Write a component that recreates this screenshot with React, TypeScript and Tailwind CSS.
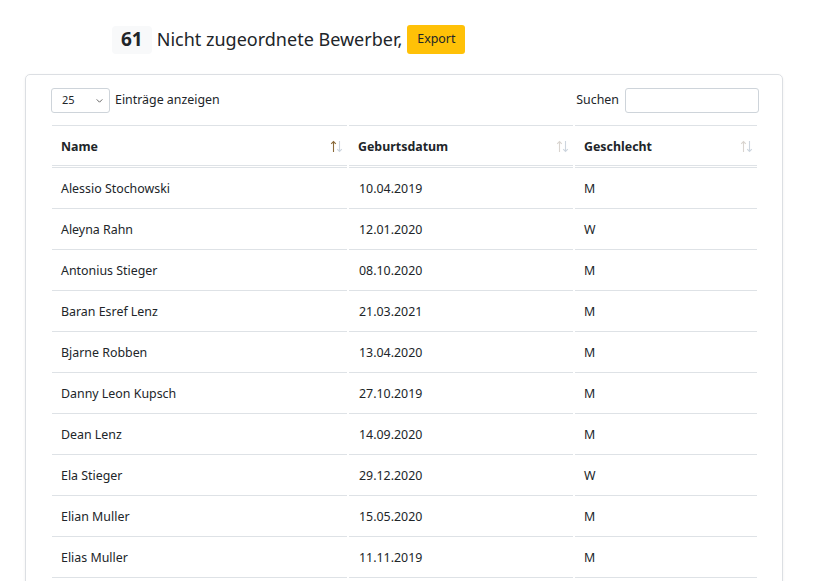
import React from 'react'

const rows = [
  ['Alessio Stochowski', '10.04.2019', 'M'],
  ['Aleyna Rahn', '12.01.2020', 'W'],
  ['Antonius Stieger', '08.10.2020', 'M'],
  ['Baran Esref Lenz', '21.03.2021', 'M'],
  ['Bjarne Robben', '13.04.2020', 'M'],
  ['Danny Leon Kupsch', '27.10.2019', 'M'],
  ['Dean Lenz', '14.09.2020', 'M'],
  ['Ela Stieger', '29.12.2020', 'W'],
  ['Elian Muller', '15.05.2020', 'M'],
  ['Elias Muller', '11.11.2019', 'M'],
]

function SortIcon({ active }: { active?: boolean }) {
  const up = active ? '#8a6a3a' : '#d9d4cf'
  return (
    <svg width="13" height="13" viewBox="0 0 13 13" fill="none" strokeWidth="1.1">
      <path d="M3.5 12V1.5M1.2 3.8L3.5 1.5L5.8 3.8" stroke={up} />
      <path d="M9.5 1V11.5M7.2 9.2L9.5 11.5L11.8 9.2" stroke="#cdd5de" />
    </svg>
  )
}

export default function App() {
  return (
    <div className="bg-white text-[#212529] font-['Noto_Sans',sans-serif] overflow-hidden h-[581px]">
      <div className="flex items-center pt-[25px] pl-[112px]">
        <span className="bg-[#f8f9fa] rounded px-[9px] h-[28px] flex items-center text-[19px] font-bold leading-none">61</span>
        <span className="ml-[5px] text-[18px] leading-none pb-[2px]">Nicht zugeordnete Bewerber,</span>
        <button className="ml-[5px] bg-[#ffc107] rounded-[3px] h-[29px] px-[10px] text-[12.4px] text-[#212529]">Export</button>
      </div>

      <div className="ml-[25px] w-[758px] mt-[20px] border border-[#dcdfe3] rounded-[5px] shadow-[0_1px_3px_rgba(0,0,0,0.06)] pl-[24px] pr-[23px] pt-[13px] pb-8 text-[12.4px]">
        <div className="flex items-center justify-between pl-[1px]">
          <div className="flex items-center">
            <div className="w-[59px] h-[25px] border border-[#ced4da] rounded-[3px] flex items-center justify-between pl-[10px] pr-[5px] text-[11px]">
              <span>25</span>
              <svg width="9" height="9" viewBox="0 0 16 16" fill="none" stroke="#555" strokeWidth="1.6"><path d="M3 6l5 5 5-5" /></svg>
            </div>
            <span className="ml-[5px]">Einträge anzeigen</span>
          </div>
          <div className="flex items-center">
            <span className="mr-[6px]">Suchen</span>
            <div className="w-[134px] h-[25px] border border-[#ced4da] rounded-[3px]" />
          </div>
        </div>

        <table className="mt-[12px] w-full border-separate border-spacing-x-[2px] border-spacing-y-0 table-fixed">
          <colgroup>
            <col className="w-[295px]" />
            <col className="w-[224px]" />
            <col className="w-[182px]" />
          </colgroup>
          <thead>
            <tr>
              {[
                ['Name', true],
                ['Geburtsdatum', false],
                ['Geschlecht', false],
              ].map(([label, active]) => (
                <th
                  key={label as string}
                  className="h-[43px] border-t border-t-[#dee2e6] border-b-[3px] border-b-[#dee2e6] text-left font-bold pl-[9px] pr-[4px] pt-[3px]"
                  style={{ borderBottomStyle: 'double' }}
                >
                  <div className="flex items-center justify-between">
                    <span>{label as string}</span>
                    <SortIcon active={active as boolean} />
                  </div>
                </th>
              ))}
            </tr>
          </thead>
          <tbody>
            {rows.map((r) => (
              <tr key={r[0]}>
                {r.map((c, i) => (
                  <td key={i} className={`h-[41px] border-b border-[#dee2e6] pr-[9px] pt-[2px] ${i === 1 ? 'pl-[10px]' : 'pl-[9px]'}`}>
                    {c}
                  </td>
                ))}
              </tr>
            ))}
          </tbody>
        </table>
      </div>
    </div>
  )
}
